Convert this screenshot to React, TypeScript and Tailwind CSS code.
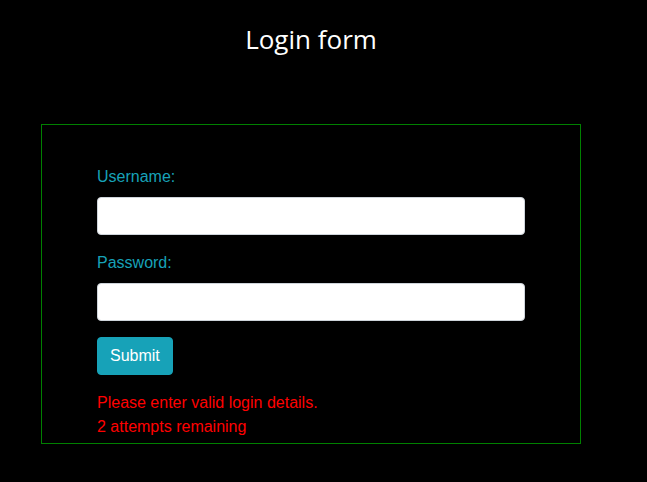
function App() {
  return (
    <div className="bg-black min-h-screen w-full" style={{ minHeight: 482 }}>
      <div className="ml-[41px] w-[540px] pt-[22px]">
        <h1 className="text-center text-white text-[26px] leading-[34px] font-['Open_Sans',sans-serif]">
          Login form
        </h1>
        <form
          className="mt-[68px] border border-[#008000] pl-[55px] pr-[55px] pt-[40px] pb-[4px] font-['Liberation_Sans',Arial,sans-serif] text-base leading-6"
          onSubmit={(e) => e.preventDefault()}
        >
          <div className="mb-4">
            <label className="block mb-2 text-[#17a2b8]">Username:</label>
            <input
              type="text"
              className="block w-full h-[38px] rounded bg-white border border-[#ced4da] px-3 outline-none"
            />
          </div>
          <div className="mb-4">
            <label className="block mb-2 text-[#17a2b8]">Password:</label>
            <input
              type="password"
              className="block w-full h-[38px] rounded bg-white border border-[#ced4da] px-3 outline-none"
            />
          </div>
          <button className="bg-[#17a2b8] border border-[#17a2b8] text-white h-[38px] px-3 rounded mb-4">
            Submit
          </button>
          <div className="text-[#ff0000]">
            <div>Please enter valid login details.</div>
            <div>2 attempts remaining</div>
          </div>
        </form>
      </div>
    </div>
  );
}

export default App;
